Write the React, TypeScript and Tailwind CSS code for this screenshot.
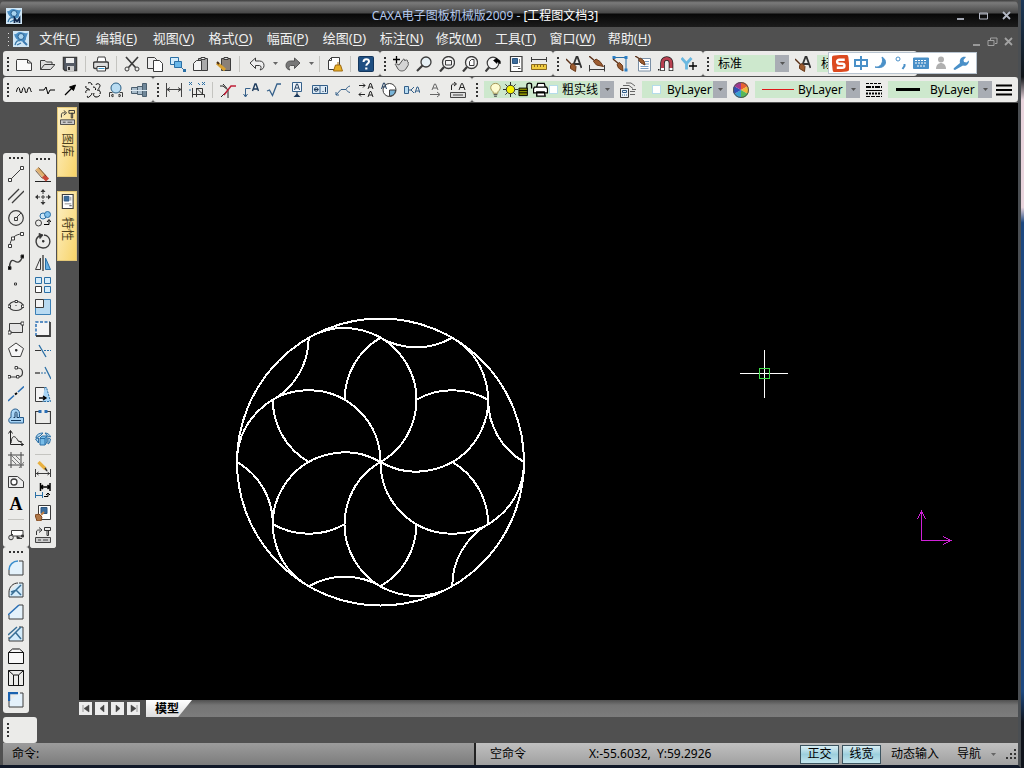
import type { ReactNode } from 'react';
import clsx from 'clsx';

const glyphs: Record<string, ReactNode> = {
  // standard
  new: <path d="M1 3.500h10.500l4 3.500v7.500h-15v-10zM11.500 3.500v3.500h4" fill="#fafafa" />,
  open: <path d="M1.500 13.500v-9h4.500l1.500 1.500h5.500v2.500M1.500 13.500l4-5h10.500l-4.500 5z" fill="#ddd" />,
  save: (
    <>
      <path d="M1.500 1.500h13v13h-11.500l-1.500-1.500z" fill="#555b66" strokeWidth="1.500" />
      <path d="M4 2h8v5h-8z" fill="#eee" stroke="none" />
      <path d="M5 10h7v5h-7z" fill="#ccc" stroke="none" />
      <path d="M6 11h2v3h-2z" fill="#333" stroke="none" />
    </>
  ),
  print: (
    <>
      <path d="M4 6l1-5h7l1 5" fill="#fff" />
      <rect x=".5" y="6" width="15" height="6.500" rx="1.500" fill="#ddd" strokeWidth="1.400" />
      <path d="M4 10.500h8.500v4.500h-8.500z" fill="#fff" />
      <path d="M5.500 12.500h6" stroke="#3a94c8" />
    </>
  ),
  cut: (
    <>
      <path d="M2 1l9.500 10.500M14 1l-9.500 10.500" strokeWidth="1.700" />
      <circle cx="3" cy="13" r="2" />
      <circle cx="13" cy="13" r="2" />
    </>
  ),
  copy: (
    <>
      <path d="M.5 1.500h7l2 2v9h-9z" fill="#eee" />
      <path d="M6.500 4.500h6l3 3v8h-9z" fill="#fff" />
    </>
  ),
  copyBlock: (
    <>
      <path d="M.5 1.500h8v7h-8z" fill="#d4ecfb" stroke="#2a6fa5" />
      <path d="M4.500 5.500h7v6h-7z" fill="#68b6e8" stroke="#2a6fa5" />
      <path d="M11 11l3 3" stroke="#2a6fa5" />
      <path d="M13 13h3v3h-3z" fill="#2a6fa5" stroke="none" />
    </>
  ),
  paste: (
    <>
      <path d="M5.500 2.500h9v12h-9z" fill="#aaa" />
      <path d="M8 1.500h4v2h-4z" fill="#eee" />
      <path d="M.5 7.500l3-3h5v10h-8z" fill="#f4f4f4" />
    </>
  ),
  pasteSpecial: (
    <>
      <path d="M5.500 2.500h9v12h-9z" fill="#8a8078" />
      <path d="M8 1.500h4v2h-4z" fill="#ddd" />
      <path d="M1 7l8 7" stroke="#d8a030" strokeWidth="3" />
      <path d="M1 6l2 2" stroke="#4a3018" strokeWidth="2" />
    </>
  ),
  undo: <path d="M1 7l5.500-5v3h4c3 0 4.500 2 4.500 4.500s-1.500 4-4 4.500c1.500-1 1.500-4.500-.5-4.500h-4v3z" fill="#eee" />,
  redo: <path d="M15 7l-5.500-5v3h-4c-3 0-4.500 2-4.500 4.500s1.500 4 4 4.500c-1.500-1-1.500-4.500.5-4.500h4v3z" fill="#777" stroke="#555" />,
  cleanup: (
    <>
      <path d="M1.500 4.500l3-3h8v12h-11zM4.500 1.500v3h-3" fill="#fff" />
      <path d="M11 6v3M8.500 9h5l2 6h-9z" fill="#e8b028" stroke="#a06a10" />
    </>
  ),
  help: (
    <>
      <rect x=".5" y=".5" width="15" height="15" rx="1" fill="#1f4f82" stroke="#14365c" />
      <path d="M5.500 6c0-4 5.500-3.500 5.500-.5 0 2-2.700 2-2.700 4.300" stroke="#fff" strokeWidth="2" />
      <path d="M7.200 11.500h2.200v2h-2.200z" fill="#fff" stroke="none" />
    </>
  ),
  pan: (
    <>
      <path d="M3 9.500c-1.500-1-.5-2.500 1-1.500l2 1 4-5.500c1-1 2 0 1.500 1l2-.5c1 0 1.500 1 .5 1.500l1 .5c1 .5.5 1.500 0 1.500.5.500.5 1.500 0 2l-2.500 4c-2 2-6 2-7.500-.5z" fill="#d4d4d4" stroke="#555" />
      <path d="M3.500 0v7M0 3.500h7" stroke="#000" strokeWidth="1.300" />
    </>
  ),
  zoom: (
    <>
      <circle cx="10" cy="6" r="5" fill="#e6f0f5" strokeWidth="1.300" />
      <path d="M6.500 9.500l-5.500 5.500" strokeWidth="2.200" />
    </>
  ),
  zoomWindow: (
    <>
      <circle cx="9.500" cy="6.500" r="6" fill="#f4f4f4" strokeWidth="1.300" />
      <path d="M6.500 4.500h6v4.500h-6z" />
      <path d="M5 11l-4 4.500" strokeWidth="2.200" />
    </>
  ),
  zoomAll: (
    <>
      <circle cx="9.500" cy="6.500" r="6" fill="#f4f4f4" strokeWidth="1.300" />
      <path d="M7.500 9.500v-4l2-2h2.500v6z" fill="#fff" />
      <path d="M5 11l-4 4.500" strokeWidth="2.200" />
    </>
  ),
  zoomPrev: (
    <>
      <circle cx="8" cy="7" r="5.800" fill="#f4f4f4" strokeWidth="1.200" />
      <path d="M8.500 4.500l3.500-2.500v1.500c3 0 4 2 3 4.500-.5-1.500-1.500-2-3-2v1.500z" fill="#000" stroke="#000" strokeWidth=".6" />
      <path d="M4 11.500l-3.500 4" strokeWidth="2.200" />
    </>
  ),
  props: (
    <>
      <path d="M2.500.5h11.500v15h-11.500z" fill="#fff" strokeWidth="1.200" />
      <path d="M4.500 2.500h5v5h-5z" fill="#3d6d9c" stroke="#2a5580" />
      <path d="M11.500 3v4M5 10.500h7" stroke="#888" />
      <path d="M10 12.500h2.500" />
    </>
  ),
  measure: (
    <>
      <path d="M.5 1v5M15.500 1v5M1 3.500h14" />
      <path d="M.5 8.500h15v5h-15z" fill="#f0cc40" stroke="#8a6a20" />
      <path d="M3.500 9v2M6.500 9v2M9.500 9v2M12.500 9v2" stroke="#8a6a20" />
    </>
  ),
  textStyle: (
    <>
      <path d="M7 10l3.500-9h1l4 11M8.500 8h6" stroke="#333" strokeWidth="1.800" />
      <path d="M0 3l6 6" stroke="#5a3018" strokeWidth="1.400" />
      <path d="M4.500 9.500l2.500-2 3 3-.5 5-5-3z" fill="#9c5c30" stroke="#6a3818" />
    </>
  ),
  dimStyle: (
    <>
      <path d="M.5 9v6.500M15.500 9v6.500M1 13.500h14" />
      <path d="M0 0l6 5" stroke="#5a3018" strokeWidth="1.400" />
      <path d="M4.500 5.500l2.500-2.500 4 2.500 3.500 5-7-1.500z" fill="#9c5c30" stroke="#6a3818" />
    </>
  ),
  pointStyle: (
    <>
      <path d="M2 1.500h12v12" stroke="#2a6fa5" />
      <path d="M.5 0h3v3h-3zM12.500 0h3v3h-3zM12.500 12.500h3v3h-3z" fill="#2a7fc5" stroke="none" />
      <path d="M1 3l6 5" stroke="#5a3018" strokeWidth="1.400" />
      <path d="M5 8.500l2.500-2 3 3 .5 5.500-4.500-3z" fill="#9c5c30" stroke="#6a3818" />
    </>
  ),
  styleManager: (
    <>
      <path d="M3.500 2.500h12v12.500h-12z" fill="#fff" stroke="#7a8fa5" />
      <path d="M5.500 10.500h8M5.500 12.500h8M10 5.500h4M10 8h4" stroke="#7a9fc5" />
      <path d="M0 0l5 3" stroke="#5a3018" strokeWidth="1.400" />
      <path d="M3.500 4l2-2 3.500 3 1 4-4-2z" fill="#9c5c30" stroke="#6a3818" />
    </>
  ),
  magnet: (
    <>
      <path d="M4.500 15v-8c0-6 8.500-6 8.500 0v8" stroke="#222" strokeWidth="4.600" />
      <path d="M4.500 12v-5c0-6 8.500-6 8.500 0v5" stroke="#b84050" strokeWidth="3" />
      <path d="M3 12h3v2.200h-3zM11.500 12h3v2.200h-3z" fill="#fff" stroke="none" />
      <path d="M0 13h1.500v1.500h-1.500z" fill="#222" stroke="none" />
    </>
  ),
  filter: (
    <>
      <path d="M.5 2l5 5.500v6M10.500 2l-5 5.500" stroke="#6ab8e0" strokeWidth="2.800" />
      <path d="M12 6v8M8 10h8" stroke="#000" strokeWidth="1.300" />
    </>
  ),
  // drawing ii
  wave: <path d="M0 10c1-1 1-4.500 2.500-4.500s1 5.500 2.500 5.500 1-5.500 2.700-5.500 1 5.500 2.500 5.500 1-5.500 2.800-5.500 1 3 2.500 4.500" stroke="#000" />,
  breakLine: <path d="M0 8h5l2-3 2 7 2-4h5" stroke="#000" />,
  arrow: (
    <>
      <path d="M3 13l7-7" stroke="#000" strokeWidth="1.200" />
      <path d="M13.500 3l-2 5.500-4-3.500z" fill="#000" stroke="#000" />
    </>
  ),
  gear: (
    <path
      d="M3 1c2-1 4 0 4 2M11 3c0-2 4-1.500 4 .5s-2 2.500-1 4M1 4c-1 2 1 3 2.500 2.500M8 5c2 0 3 1 2.500 3M5 8c-3-1-5 1-4 3M12 8c3 0 4 2 3 4M3 14c-2 1 0 2 1 1s3-2 3-4M9 11c-1 2 0 4 2 4s4-1 3.500-2"
      stroke="#000"
    />
  ),
  hole: (
    <>
      <circle cx="8" cy="6" r="5" fill="#b8dcf2" stroke="#2a5f85" />
      <path d="M1.500 15v-4.500h3M14.500 15v-4.500h-3M3 13.500l2-1.500v3zM13 13.500l-2-1.500v3z" />
    </>
  ),
  shaft: (
    <>
      <path d="M.5 5.500h6v6h-6zM6.500 4.500h5v8h-5z" fill="#a8bccb" stroke="#4c6070" />
      <path d="M11.500 1.500h4v13h-4z" fill="#6f8799" stroke="#4c6070" />
      <path d="M0 8.500h16" stroke="#dce8f0" />
    </>
  ),
  // annotation
  dim: <path d="M.5 1v14M15.500 1v14M1 7.500h14M4 5.500l-3 2 3 2M12 5.500l3 2-3 2" stroke="#444" />,
  coordDim: (
    <>
      <path d="M3.500 6v9.500M3 12.500h12M7.500 6v9M7.500 6.500h6v6h2v3M7.500 6l6 6" stroke="#333" />
      <path d="M0 0l3 3M3 0l-3 3M9 1l2 2M13 0l3 3M16 0l-3 3M0 8h2" stroke="#2a6fa5" />
    </>
  ),
  chamfer: (
    <>
      <path d="M0 4h3l5 4" stroke="#222" />
      <path d="M1 15l5-5M8 8v8M3 2l4 4.500" stroke="#222" />
      <path d="M4 13l7-9h5" stroke="#c02038" strokeWidth="1.500" />
    </>
  ),
  leader: (
    <>
      <path d="M2.500 14.500v-8h5M.5 12l2 3 2-3" stroke="#35608a" />
      <path d="M9.500 9l2.500-7h1l2.500 7M10.500 7h4" stroke="#1c3a5c" strokeWidth="1.400" />
    </>
  ),
  rough: <path d="M1 9l2.500-1 3 5.500 4.500-11.500h4" stroke="#35608a" strokeWidth="1.300" />,
  datum: (
    <>
      <path d="M3.500.5h9v9h-9z" fill="#eef4fa" stroke="#35608a" />
      <path d="M5.500 8l2-6h1l2 6M6.500 6h3M8 10v3" stroke="#1c3a5c" />
      <path d="M8 11.500l3.500 3.500h-7z" fill="#1c3a5c" stroke="none" />
    </>
  ),
  tolerance: (
    <>
      <path d="M.5 3.500h15v8h-15zM8 3.500v8" fill="#dceaf5" stroke="#35608a" />
      <circle cx="4.200" cy="7.500" r="1.800" stroke="#1c3a5c" />
      <path d="M2 7.500h4.500M10.500 9.500h1M13.500 5v5" stroke="#1c3a5c" />
    </>
  ),
  weld: <path d="M1 13l5-5.500h5c1-2 2-3 4-3.500M11 7.500c1 1.500 2 2.500 4 3M1 10v3h3" stroke="#35608a" />,
  textSwap: (
    <>
      <path d="M1 3.500h6M5 1.500l2 2-2 2M7 12.500h-6M3 10.500l-2 2 2 2" stroke="#222" />
      <path d="M10 7l2-5.500h1l2 5.500M11 5h3M10 15l2-5.500h1l2 5.500M11 13h3" stroke="#222" />
    </>
  ),
  detailView: (
    <>
      <circle cx="8.500" cy="8" r="6.500" fill="#fff" />
      <path d="M8.500 8h6c0 3-2 6-6 6z" fill="#78b4d8" />
      <path d="M.5 7l2-6h1l2 6M1.500 5h3" stroke="#1c3a5c" />
    </>
  ),
  sectionView: (
    <>
      <path d="M.5 4.500h4v7h-4z" fill="#b8dcf2" stroke="#35608a" />
      <path d="M5 8h2M10 5l-3 3 3 3M11 11l2-6h1l2 6M12 9h3" stroke="#35608a" />
    </>
  ),
  direction: <path d="M5 8l2.500-6h1l2.500 6M6 6h4M3 12.500h9M10 10l3 2.500-3 2.500" stroke="#666" />,
  dimEdit: (
    <>
      <path d="M1.500 8v-4c0-2 1-2 4-2M4 0l2.500 2-2.500 2M9 8l2.500-6.500h1l2.500 6.500M10 5.500h4" stroke="#222" />
      <path d="M.5 10.500h15v5h-15zM3 13h10" fill="#ddd" stroke="#444" />
    </>
  ),
  // layer and line settings
  bulb: (
    <>
      <path d="M5.500 10.500c-5-4-2-9 2.500-9s7.500 5 2.500 9v1.500h-5z" fill="#fdfbd0" stroke="#a09050" />
      <path d="M6 13.500h4M6.500 15.200h3" />
    </>
  ),
  sun: (
    <>
      <path d="M8 0v16M0 8h16M2.500 2.500l11 11M13.500 2.500l-11 11" stroke="#222" />
      <circle cx="8" cy="8" r="4.500" fill="#f4f000" stroke="#333" />
    </>
  ),
  lock: (
    <>
      <path d="M9.500 9v-6c0-2.500 5-2.500 5 0v4" stroke="#000" strokeWidth="1.400" />
      <path d="M1 6.500h9v8h-9z" fill="#8a9000" stroke="#000" />
      <path d="M1 9h9M1 11.500h9" stroke="#000" />
    </>
  ),
  layerPrint: <path d="M4 5l1-3.500h7l1 3.500M1.500 5.500h13l1 2v4h-15v-4zM4 10.500h8l1 4.500h-9z" fill="#fff" stroke="#000" strokeWidth="1.400" />,
  layers: (
    <>
      <path d="M.5 6.500h8v9h-8z" fill="#eef4fa" />
      <path d="M2.500 8.500h4v2h-4zM2 13h1M4 13h1M6 13h1" stroke="#35608a" />
      <path d="M3 3.500h6l4 3M6 1h5l4 3M10 9.500h5M10 12.500h5M12 7.500h4" stroke="#666" />
    </>
  ),
  palette: (
    <g stroke="none">
      <path d="M8 8V0a8 8 0 0 1 7 4z" fill="#e86030" />
      <path d="M8 8l7-4a8 8 0 0 1 0 8z" fill="#f0b838" />
      <path d="M8 8l7 4a8 8 0 0 1-7 4z" fill="#58b858" />
      <path d="M8 8v8a8 8 0 0 1-7-4z" fill="#38a0d0" />
      <path d="M8 8l-7 4a8 8 0 0 1 0-8z" fill="#3050b8" />
      <path d="M8 8l-7-4a8 8 0 0 1 7-4z" fill="#a03890" />
      <circle cx="8" cy="8" r="7.500" stroke="#555" fill="none" />
    </g>
  ),
  lineTypes: (
    <g stroke="#000">
      <path d="M0 1.500h16" strokeDasharray="3 1" />
      <path d="M0 5h16" strokeDasharray="5 1 2 1" strokeWidth="2" />
      <path d="M0 8.500h16" />
      <path d="M0 11.500h16" strokeDasharray="2 1" strokeWidth="2" />
      <path d="M0 14.500h16" strokeDasharray="4 1" />
    </g>
  ),
  lineWidths: <path d="M0 3.500h16M0 8h16M0 12.500h16" stroke="#000" strokeWidth="2" />,
  // draw
  line: (
    <>
      <path d="M2 14l12-12" />
      <path d="M.5 12.500h3v3h-3zM12.500.5h3v3h-3z" fill="#fff" />
    </>
  ),
  parallel: <path d="M0 12l11-11M4 15l12-12" strokeWidth="1.300" />,
  circle: (
    <>
      <circle cx="8" cy="8" r="7.300" strokeWidth="1.200" />
      <path d="M6.500 7.500h3v3h-3zM9 7l4-4" />
    </>
  ),
  arc: (
    <>
      <path d="M2 14c0-7 5-12 12-12" />
      <path d="M.5 12.500h3v3h-3zM3.500 5h3v3h-3zM12.500.5h3v3h-3z" fill="#fff" />
    </>
  ),
  spline: (
    <>
      <path d="M1.500 14c0-6 2-9 5-7s6 2 8-5" strokeWidth="1.400" />
      <path d="M0 12.500h3v3h-3zM13 1h3v3h-3z" fill="#000" />
    </>
  ),
  point: <path d="M6.500 7h2v2h-2z" fill="#fff" />,
  ellipse: (
    <>
      <ellipse cx="8" cy="8" rx="7" ry="4.500" strokeWidth="1.200" />
      <path d="M0 7h2.500v2.500h-2.500zM13.500 7h2.500v2.500h-2.500zM7 2.500h2.500v2h-2.500zM7.500 7.500h1" fill="#fff" />
    </>
  ),
  rect: (
    <>
      <path d="M1.500 3.500h13v9h-13z" fill="#e4e4e4" />
      <path d="M0 11h3v3h-3zM13 2h3v3h-3z" fill="#fff" />
    </>
  ),
  polygon: (
    <>
      <path d="M8 1l7.500 5.500-3 8h-9l-3-8z" fill="#f6f6f6" />
      <path d="M7.500 7.500h1.500v1.500h-1.500z" fill="#000" />
    </>
  ),
  polyline: (
    <>
      <path d="M2 13h8c6 0 6-9 0-9h-2" strokeWidth="1.200" />
      <path d="M0 11.500h2.500v2.500h-2.500zM8.500 11.500h2.500v2.500h-2.500zM7 2.500h2.500v2.500h-2.500z" fill="#fff" />
    </>
  ),
  centerLine: (
    <>
      <path d="M0 15l6-5.500M10 6l6-5.500" stroke="#2a6fb5" strokeWidth="1.600" />
      <path d="M7 8.500l2-1.500" stroke="#000" strokeWidth="2" />
    </>
  ),
  offset: (
    <>
      <path d="M3 9.500c-3 0-3 5.500 0 5.500h12.500v-5.500h-4v-4c0-6-8.500-6-8.500 0z" fill="#a8d4f5" stroke="#245a8a" />
      <path d="M3 12.500h10M5.500 9.500h1.500v-4c0-2 2-2 2 0v4h2" stroke="#16395c" />
    </>
  ),
  curve: <path d="M2.500 1v13.500h13M.5 3.500l2-3 2 3M12.500 12.500l3 2-3 2M3 13c1-11 6-5 7-2l4 1" stroke="#222" />,
  hatch: (
    <>
      <path d="M3 0v16M13 0v16M0 3h16M0 13h16" stroke="#444" />
      <path d="M4 4l8 8M4 8l4 4M8 4l4 4M11 16l5-6" stroke="#777" />
    </>
  ),
  region: (
    <>
      <path d="M.5 2.500h9l6 5v6h-15z" fill="#eee" />
      <circle cx="6" cy="8" r="3" fill="#fff" strokeWidth="1.300" />
    </>
  ),
  block: (
    <>
      <path d="M3.500 4.500h11.500v5.500h-11.500zM2 11l3-3" fill="#fff" />
      <circle cx="3" cy="11.500" r="2.300" fill="#ddd" />
      <path d="M13.500 9h2v2h-2zM9 10v2.500h5" fill="#333" />
    </>
  ),
  // edit
  erase: (
    <>
      <path d="M0 14.500h16" stroke="#222" />
      <path d="M2 1.500l7 7.500" stroke="#e0b070" strokeWidth="4" />
      <path d="M8.500 9l4 4" stroke="#c84838" strokeWidth="4.500" />
      <path d="M.5 3.500l7 8M3.500.5l8 9" stroke="#58381c" strokeWidth=".8" />
    </>
  ),
  move: (
    <>
      <path d="M8 0l2.500 3h-5zM8 16l2.500-3h-5zM0 8l3-2.500v5zM16 8l-3-2.500v5z" fill="#333" stroke="none" />
      <path d="M8 2v3M8 11v3M2 8h3M11 8h3M7 7h2v2h-2z" />
    </>
  ),
  copyMove: (
    <>
      <circle cx="3.500" cy="12" r="3" />
      <circle cx="8" cy="5" r="3" fill="#cfe8f8" stroke="#2a6fa5" />
      <circle cx="12.500" cy="3.500" r="3" fill="#80c0ec" stroke="#2a6fa5" />
      <path d="M9 13.500h5v-4M12 11l2-2.500 2 2.500" stroke="#000" />
    </>
  ),
  rotate: (
    <>
      <path d="M5 2.500c-6 3-5 12 3 12.500 9-.5 9-12 1-13" strokeWidth="1.400" />
      <path d="M4 .5l4 1.500-3 3.500z" fill="#333" />
      <path d="M7.500 7.500h1.500v1.500h-1.500z" fill="#000" />
    </>
  ),
  mirror: (
    <>
      <path d="M5.500 3v11.500h-5z" fill="#eee" />
      <path d="M10.500 3v11.500h5z" fill="#68b0e4" stroke="#2a6fa5" />
      <path d="M8 0v16" stroke="#000" />
    </>
  ),
  array: (
    <>
      <path d="M.5.500h6v6h-6zM9.500.5h6v6h-6zM9.500 9.500h6v6h-6z" fill="#d4ecfb" stroke="#2a6fa5" />
      <path d="M.5 9.500h6v6h-6z" fill="#fff" />
    </>
  ),
  scale: (
    <>
      <path d="M.5.500h15v15h-15z" fill="#b8daf2" stroke="#3a7fb5" />
      <path d="M.5.500h8v8h-8z" fill="#f4f4f4" />
    </>
  ),
  stretch: (
    <>
      <path d="M1 1h14v14h-14z" fill="#f4f4f4" stroke="none" />
      <path d="M1 15v-14h14" stroke="#2a6fb5" strokeWidth="1.500" strokeDasharray="3 1.500" />
      <path d="M1 15h14v-14" strokeWidth="1.800" />
    </>
  ),
  trim: (
    <>
      <path d="M4 2l7 12" stroke="#2a6fa5" strokeWidth="1.300" />
      <path d="M0 7.500h6" stroke="#333" />
      <path d="M9 7.500h7" stroke="#2a6fa5" strokeDasharray="2 1" />
    </>
  ),
  extend: (
    <>
      <path d="M10 2l6 12" stroke="#2a6fa5" strokeWidth="1.300" />
      <path d="M0 8h5" stroke="#000" />
      <path d="M6 8h6" stroke="#2a6fa5" strokeDasharray="2 1" />
    </>
  ),
  stretchRight: (
    <>
      <path d="M.5.500h9v14h-9z" fill="#f4f4f4" />
      <path d="M9.500.5h2l4 14h-8" fill="#a8d4f5" stroke="#2a6fa5" strokeDasharray="2 1" />
      <path d="M4 11h6M8 9l3 2-3 2" stroke="#000" strokeWidth="1.300" />
    </>
  ),
  breakAt: (
    <>
      <path d="M4 2.500h-3.500v12h15v-12h-3.500" strokeWidth="1.200" />
      <path d="M3.500 1h3v3h-3zM9.500 1h3v3h-3z" fill="#2a6fb5" stroke="none" />
    </>
  ),
  explode: (
    <g stroke="#2a6fa5">
      <path d="M1 6c1-3 4-4 7-4l-3 3-4 2zM10 2c3 0 5 2 5.500 4l-3-1zM.5 8l3-1v5zM13 7l2.500 1-1 4-1.500 1z" fill="#b8dcf2" />
      <path d="M5 7l2-2h5v6l-2 3h-5zM5 7.500h5v6M10 7.500l2-2.500" fill="#78bce8" />
    </g>
  ),
  dimPencil: (
    <>
      <path d="M.5 8v8M15.500 8v8M1 12.500h14M3.500 11l-2 1.500 2 1.500M12.500 11l2 1.500-2 1.500" />
      <path d="M3.500 1l7 7" stroke="#e8b040" strokeWidth="3.200" />
      <path d="M10 7l2 3" stroke="#333" strokeWidth="1.500" />
    </>
  ),
  dimSpace: (
    <>
      <path d="M5.500 0v8M15 0v8M6 4h9M8 2l-2 2 2 2M12.500 2l2 2-2 2" stroke="#000" strokeWidth="1.500" />
      <path d="M.5 9v6M7.500 9v6M1 12.500h7" stroke="#2a6fa5" />
      <path d="M9 13.500h4v-3M11 12l2-2 2 2" stroke="#000" />
    </>
  ),
  matchProps: (
    <>
      <path d="M3.500.5h12v14h-12z" fill="#fff" />
      <path d="M6 2.500h6v6h-6z" fill="#3d6d9c" stroke="#2a5580" />
      <path d="M9 7l-3 3" stroke="#c08048" strokeWidth="2" />
      <path d="M0 10l4-1 3 3-1 4h-4z" fill="#b07848" stroke="#804820" />
    </>
  ),
  library: (
    <>
      <path d="M1.500 8v-3c0-2 1-2 4-2M4 .5l3 2.500-3 2.500M9.500.5h6v3h-6zM12 3.500h1.500v5h-1.500z" stroke="#333" />
      <path d="M.5 10.500h15v5h-15zM3 13h3M8 13h5" fill="#ccc" stroke="#444" />
    </>
  ),
  // corners
  fillet: (
    <>
      <path d="M1.500 15v-4c0-6 4-9.500 10-9.500h3.500v13.500z" fill="#e4f2fb" stroke="none" />
      <path d="M1 10v5h14v-14h-4" />
      <path d="M1 10c0-5 4-9 9-9" stroke="#3a8fcf" strokeWidth="1.500" />
    </>
  ),
  multiFillet: (
    <>
      <path d="M1 10v5h14v-14h-4" fill="#d4ecfb" />
      <path d="M1 10c0-5 4-9 9-9" stroke="#333" />
      <path d="M3 13l10-10M8 8l5 5M3 10l6-2" stroke="#3a6f95" strokeWidth="1.500" />
    </>
  ),
  chamferCorner: (
    <>
      <path d="M1 11v4h14v-14h-4" fill="#e4f2fb" />
      <path d="M0 11l11-10" stroke="#2a6fb5" strokeWidth="1.500" />
    </>
  ),
  multiChamfer: (
    <>
      <path d="M1 11v4h14v-14h-4" fill="#d4ecfb" />
      <path d="M0 9l9-8M1 13l12-12M8 7l5 6" stroke="#3a6f95" strokeWidth="1.500" />
    </>
  ),
  outerChamfer: <path d="M.5 4.500h15v11h-15zM.5 4.500l4-3.500h7l4 3.500" fill="#f8f8f8" stroke="#111" />,
  innerChamfer: <path d="M.5.500h15v15h-15zM5.500 15v-10h5v10M.5.500l5 4.500M15.500.5l-5 4.500" stroke="#111" />,
  sharpCorner: (
    <>
      <path d="M1 9v6h14v-14h-3" fill="#e4f1fb" />
      <path d="M1 9v-8h9" stroke="#1a62b0" strokeWidth="2.400" />
    </>
  ),
};

const standard = ['new', 'open', 'save', '|', 'print', '|', 'cut', 'copy', 'copyBlock', 'paste', 'pasteSpecial', '|', 'undo', 'v', 'redo', 'v', '|', 'cleanup', '|', 'help'];
const view = ['pan', 'zoom', 'zoomWindow', 'zoomAll', 'zoomPrev', 'props', 'measure'];
const styles = ['textStyle', 'dimStyle', 'pointStyle', 'styleManager', 'magnet', 'filter'];
const shapes = ['wave', 'breakLine', 'arrow', 'gear', 'hole', 'shaft'];
const annotate = ['dim', 'coordDim', '|', 'chamfer', 'leader', 'rough', 'datum', 'tolerance', 'weld', 'textSwap', 'detailView', 'sectionView', 'direction', 'dimEdit'];
const draw = ['line', 'parallel', 'circle', 'arc', 'spline', 'point', 'ellipse', 'rect', 'polygon', 'polyline', 'centerLine', 'offset', 'curve', 'hatch', 'region', 'text', '|', 'block'];
const edit = ['erase', 'move', 'copyMove', 'rotate', 'mirror', 'array', 'scale', 'stretch', 'trim', 'extend', 'stretchRight', 'breakAt', 'explode', '|', 'dimPencil', 'dimSpace', 'matchProps', 'library'];
const corners = ['fillet', 'multiFillet', 'chamferCorner', 'multiChamfer', 'outerChamfer', 'innerChamfer', 'sharpCorner'];

const menus = [
  ['文件', 'F'], ['编辑', 'E'], ['视图', 'V'], ['格式', 'O'], ['幅面', 'P'], ['绘图', 'D'],
  ['标注', 'N'], ['修改', 'M'], ['工具', 'T'], ['窗口', 'W'], ['帮助', 'H'],
];

function Glyph({ name, small }: { name: string; small?: boolean }) {
  return (
    <svg viewBox="0 0 16 16" fill="none" stroke="#3c3c3c" className={clsx('shrink-0', small ? 'size-[15px]' : 'size-4')}>
      {glyphs[name]}
    </svg>
  );
}

function Grip({ vertical }: { vertical?: boolean }) {
  return (
    <div className={clsx('flex shrink-0 items-center justify-center gap-[2px]', vertical ? 'h-[10px]' : 'w-[9px] flex-col')}>
      {[0, 1, 2, 3].map((i) => (
        <span key={i} className="size-[2px] bg-[#333]" />
      ))}
    </div>
  );
}

function ToolButton({ name, vertical }: { name: string; vertical?: boolean }) {
  if (name === '|') {
    return (
      <div className={clsx('flex shrink-0 items-center justify-center', vertical ? 'h-2' : 'w-2')}>
        <span className={clsx('bg-[#c4c4c0]', vertical ? 'h-px w-4' : 'h-4 w-px')} />
      </div>
    );
  }
  if (name === 'v') {
    return (
      <button aria-label="more" className="flex w-2 shrink-0 items-center justify-center">
        <svg viewBox="0 0 5 3" className="h-[3px] w-[5px]"><path d="M0 0h5L2.500 3z" fill="#666" /></svg>
      </button>
    );
  }
  return (
    <button
      aria-label={name}
      className={clsx(
        'flex shrink-0 items-center justify-center hover:bg-[#d6e6f4]',
        vertical ? 'h-[22px] w-full' : name === 'undo' || name === 'redo' ? 'w-7' : 'w-[23px]',
      )}
    >
      {name === 'text' ? (
        <span className="font-['Liberation_Serif',serif] text-lg leading-none font-bold text-black">A</span>
      ) : (
        <Glyph name={name} />
      )}
    </button>
  );
}

function Toolbar({ items, vertical, children }: { items: string[]; vertical?: boolean; children?: ReactNode }) {
  return (
    <div className={clsx('flex bg-[#ebebe9]', vertical ? 'w-[26px] flex-col rounded-[3px] pb-[2px]' : 'h-[25px] rounded-[3px] pr-[3px]')}>
      <Grip vertical={vertical} />
      {items.map((name, i) => (
        <ToolButton key={i} name={name} vertical={vertical} />
      ))}
      {children}
    </div>
  );
}

function Combo({ label, value, className, children }: { label: string; value: string; className: string; children?: ReactNode }) {
  return (
    <div className={clsx('my-[4px] flex shrink-0 items-center bg-[#cde8cd] text-black', className)}>
      {children}
      <select aria-label={label} className="h-full min-w-0 flex-1 appearance-none bg-transparent pl-1 text-xs outline-none">
        <option>{value}</option>
      </select>
      <span className="pointer-events-none flex h-full w-[14px] items-center justify-center bg-[#a9adb4]">
        <svg viewBox="0 0 5 3" className="h-[3px] w-[5px]"><path d="M0 0h5L2.500 3z" fill="#555" /></svg>
      </span>
    </div>
  );
}

function AppLogo({ letter }: { letter?: boolean }) {
  return (
    <svg viewBox="0 0 16 16" className="size-4 shrink-0">
      <path d="M0 0h16v16H0z" fill="#cfe6f6" />
      <path d="M1 3c3 1 3-2 6-2s5 2 7 1-1 4-1 6-3 3-6 2-5-3-6-7z" fill="#4a8ec4" />
      <circle cx="8" cy="5.500" r="3" fill="#a8d4f0" stroke="#2a6090" />
      <path d="M2 14c1-4 3-5 5-4M4 14l4-2" stroke="#3a78a8" strokeWidth="1.300" fill="none" />
      {letter ? <path d="M8.500 15V10l2.500 3.500L13.500 10v5" stroke="#10284c" strokeWidth="1.800" fill="none" /> : <path d="M10 10l4 4" stroke="#3a7ab0" strokeWidth="2" />}
    </svg>
  );
}

function WindowButtons({ dim }: { dim?: boolean }) {
  return (
    <div className={clsx('flex', dim ? 'text-[#a2a2a2]' : 'text-[#b4b8c4]')}>
      {['M2 9h7', dim ? 'M1 4.500h6v5H1zM3.500 4V2H10v5.500H8' : 'M1.500 3h8v6h-8zM1.500 4h8', 'M2 2l7 7M9 2l-7 7'].map((d, i) => (
        <button key={d} aria-label={['minimize', 'maximize', 'close'][i]} className={clsx('flex items-center justify-center', dim ? 'w-4' : 'w-[23px]')}>
          <svg viewBox="0 0 11 11" className="size-[11px]" fill="none" stroke="currentColor" strokeWidth={i === 1 ? 1 : 1.800}>
            <path d={d} />
          </svg>
        </button>
      ))}
    </div>
  );
}

const imeItems: [string, ReactNode][] = [
  ['sogou', <g key="s"><rect x="0" y="0" width="16" height="16" rx="3" fill="#dc4a20" transform="rotate(-6 8 8)" /><path d="M12 4.500H7c-3 0-3 3.700 0 3.700h2.500c3 0 3 3.800 0 3.800H4.500" stroke="#fff" strokeWidth="2.200" /></g>],
  ['language', <path key="l" d="M2 5h12v6H2zM8 1v14" stroke="#4a90c8" strokeWidth="2" />],
  ['moon', <path key="m" d="M9 2c7 4 3 13-7 10 5 1 9-4 7-10z" fill="#4a90c8" stroke="#4a90c8" />],
  ['punctuation', <g key="p" stroke="#4a90c8"><circle cx="5" cy="4" r="2" /><path d="M11.500 9v2l-2 3" strokeWidth="2" /></g>],
  ['keyboard', <g key="k" stroke="#4a90c8"><path d="M.5 3h15v10.500H.5z" fill="#4a90c8" /><path d="M2 5.500h12M2 8h12M4 11h8" stroke="#fff" strokeDasharray="2 1" /></g>],
  ['account', <g key="a" fill="#b0b0b0"><circle cx="8" cy="4.500" r="3" /><path d="M3 14c0-8 10-8 10 0z" /></g>],
  ['settings', <path key="w" d="M2 15c-1 0-2-1-1-2l6-5c-1-4 2-7 6-6l-2.500 3 .5 2 2.500.5 2.500-2c0 4-3 6-6 5z" fill="#4a90c8" />],
];

function Drawing() {
  return (
    <svg className="absolute inset-0 h-full w-full" fill="none" shapeRendering="crispEdges">
      <g transform="translate(301.500 359)" stroke="#fff" strokeWidth="2">
        <circle r="143.500" />
        {[0, 60, 120, 180, 240, 300].map((deg) => (
          <g key={deg} transform={`rotate(${deg})`}>
            <path d="M0 0A71.750 71.750 0 0 0-71.750-124.280" />
            <path d="M-35.880-62.140A71.750 71.750 0 0 1 0-124.280" />
            <path d="M-71.750-124.280A71.750 71.750 0 0 1-107.630-62.140" />
          </g>
        ))}
      </g>
      <path d="M661 270.500h48M685.500 247v48" stroke="#fff" />
      <path d="M680.500 265.500h10v10h-10z" stroke="#3fe04a" />
      <path d="M842.500 408v29.500h30M838.500 416l4-8 4 8M864 433.500l8 4-8 4" stroke="#d020d8" />
    </svg>
  );
}

const sideTabs = [
  { name: '图库', icon: 'library' },
  { name: '特性', icon: 'props' },
];

export default function App() {
  return (
    <div className="flex min-h-screen flex-col bg-[linear-gradient(#1c3858_0%,#101418_10%,#e8d4dc_13%,#e8d4dc_27%,#1c4880_29%,#1c4880_90%,#10141c_94%)] pr-[3px] font-['Noto_Sans','Noto_Sans_CJK_SC',sans-serif] text-xs select-none">
      <div className="flex flex-1 flex-col border-r-[3px] border-b-[3px] border-[#4a4e52] border-b-[#101828] bg-[#505050]">
        <header className="flex h-[27px] items-stretch rounded-t-md bg-[linear-gradient(#3c3c3c_0%,#7a7a7a_10%,#484848_48%,#080808_52%,#1c1c1c_100%)] pt-1">
          <span className="flex w-[52px] items-center pl-[6px]"><AppLogo letter /></span>
          <h1 className="flex flex-1 items-center justify-center whitespace-pre text-[#b4c8ec]">
            CAXA电子图板机械版2009 - <span className="text-white">[工程图文档3]</span>
          </h1>
          <div className="flex w-[100px] justify-end"><WindowButtons /></div>
        </header>

        <nav className="flex h-6 items-stretch pl-2 text-[#f0f0f0]">
          <div className="flex items-center gap-[4px]">
            <span className="flex flex-col gap-[3px]">
              {[0, 1, 2, 3].map((i) => <i key={i} className="size-px bg-[#ddd]" />)}
            </span>
            <AppLogo />
          </div>
          <div className="ml-[2px] flex">
            {menus.map(([label, key]) => (
              <button key={key} className="w-[57px] whitespace-nowrap text-[13px] hover:bg-[#6a6a6a]">
                {label}(<u className="underline-offset-2">{key}</u>)
              </button>
            ))}
          </div>
          <div className="ml-auto flex pt-1 pr-[2px]"><WindowButtons dim /></div>
        </nav>

        <div className="relative flex flex-col gap-px pb-px pl-[3px]">
          <div className="flex">
            <Toolbar items={standard} />
            <Toolbar items={view} />
            <Toolbar items={styles} />
            <Toolbar items={[]}>
              <Combo label="text style" value="标准" className="ml-[2px] w-[75px]" />
              <span className="flex w-7 justify-center"><ToolButton name="textStyle" /></span>
              <Combo label="dimension style" value="标准" className="w-[97px]" />
            </Toolbar>
          </div>
          <div className="flex">
            <Toolbar items={shapes} />
            <Toolbar items={annotate} />
            <Toolbar items={[]}>
              <Combo label="layer" value="粗实线" className="ml-[3px] w-[130px] pl-1">
                {['bulb', 'sun', 'lock', 'layerPrint'].map((n) => <Glyph key={n} name={n} small />)}
                <span className="ml-px size-[9px] border border-[#b4dcea] bg-white" />
              </Combo>
              <span className="flex w-7 justify-center"><ToolButton name="layers" /></span>
              <Combo label="colour" value="ByLayer" className="w-[85px]">
                <span className="mr-[2px] ml-[10px] size-[9px] border border-[#b4dcea] bg-white" />
              </Combo>
              <span className="flex w-7 justify-center"><ToolButton name="palette" /></span>
              <Combo label="line type" value="ByLayer" className="w-[105px]">
                <span className="ml-[7px] h-px w-8 bg-[#e01818]" />
              </Combo>
              <span className="flex w-7 justify-center"><ToolButton name="lineTypes" /></span>
              <Combo label="line width" value="ByLayer" className="w-[104px]">
                <span className="mr-[6px] ml-2 h-[3px] w-6 bg-black" />
              </Combo>
              <ToolButton name="lineWidths" />
            </Toolbar>
          </div>

          <div className="absolute top-px left-[828px] flex h-[22px] w-[149px] items-center gap-1 border border-[#b8c4d0] bg-white px-[3px]">
            {imeItems.map(([name, shape]) => (
              <button key={name} aria-label={name}>
                <svg viewBox="0 0 16 16" className={clsx('shrink-0', name === 'sogou' ? 'size-[17px]' : 'size-4')} fill="none">{shape}</svg>
              </button>
            ))}
          </div>
        </div>

        <main className="flex flex-1">
          <aside className="flex items-start gap-px pl-[3px]">
            <div className="mt-[50px] flex flex-col">
              <Toolbar items={draw} vertical />
              <Toolbar items={corners} vertical />
            </div>
            <div className="mt-[50px] rounded-[3px] bg-[#ebebe9] pt-px">
              <Toolbar items={edit} vertical />
            </div>
            <div className="flex w-[22px] flex-col gap-[14px] pt-1">
              {sideTabs.map((tab) => (
                <button key={tab.name} className="flex h-[70px] w-5 flex-col items-center gap-2 border border-[#e4c878] bg-linear-to-br from-[#fdf0c4] to-[#f8d468] pt-[2px] text-[#4c4020]">
                  <Glyph name={tab.icon} small />
                  <span className="[text-orientation:sideways] [writing-mode:vertical-rl]">{tab.name}</span>
                </button>
              ))}
            </div>
          </aside>

          <section className="flex flex-1 flex-col">
            <div className="relative flex-1 overflow-hidden bg-black">
              <Drawing />
            </div>
            <div className="flex h-[17px] items-stretch bg-linear-to-b from-[#505050] via-[#747474] via-30% to-[#7c7c7c]">
              <div className="flex items-center gap-[3px] bg-[#505050] pr-[6px]">
                {['M3 2v7M9 2v7L4 5.500z', 'M8 2v7L4 5.500z', 'M4 2v7l4-3.500z', 'M9 2v7M3 2v7l5-3.500z'].map((d, i) => (
                  <button key={d} aria-label={['first', 'previous', 'next', 'last'][i]} className="flex size-[13px] items-center justify-center bg-[#ececec]">
                    <svg viewBox="0 0 12 11" className="h-[11px] w-3" fill="#444" stroke="#444"><path d={d} strokeWidth=".5" /></svg>
                  </button>
                ))}
              </div>
              <button className="w-[46px] bg-linear-to-b from-white to-[#ddd] pr-1 text-center text-xs leading-[17px] font-bold text-black [clip-path:polygon(0_0,100%_0,70%_100%,0_100%)]">
                模型
              </button>
            </div>
          </section>
        </main>

        <div className="flex h-[26px] pl-[3px]">
          <div className="flex w-[34px] rounded-[3px] bg-[#ebebe9]"><Grip /></div>
        </div>

        <footer className="flex h-[22px] text-black">
          <label className="ml-[3px] flex w-[473px] items-center gap-1 border-r-2 border-[#222] bg-linear-to-b from-[#9c9c9c] to-[#7c7c7c] pl-[9px]">
            命令:
            <input className="min-w-0 flex-1 bg-transparent outline-none" />
          </label>
          <div className="flex flex-1 items-center bg-linear-to-b from-[#c0c0c0] to-[#a0a0a0] pr-px pl-[14px]">
            <span className="w-[99px]">空命令</span>
            <output>X:-55.6032,&nbsp; Y:59.2926</output>
            <div className="ml-auto flex items-center gap-[3px]">
              {['正交', '线宽'].map((mode) => (
                <button key={mode} aria-pressed="true" className="h-[19px] w-[39px] border border-[#3c5460] bg-linear-to-b from-[#d8eef4] via-[#9ccfdd] to-[#c4e6ee]">
                  {mode}
                </button>
              ))}
            </div>
            <button className="ml-[10px]">动态输入</button>
            <button className="ml-[18px]">导航</button>
            <button aria-label="options" className="mx-[10px]">
              <svg viewBox="0 0 5 3" className="h-[3px] w-[5px]"><path d="M0 0h5L2.500 3z" fill="#666" /></svg>
            </button>
            <svg viewBox="0 0 11 11" className="size-[11px]" fill="#333">
              <path d="M8 0h2v2H8zM4 4h2v2H4zM8 4h2v2H8zM0 8h2v2H0zM4 8h2v2H4zM8 8h2v2H8z" />
            </svg>
          </div>
        </footer>
      </div>
    </div>
  );
}
